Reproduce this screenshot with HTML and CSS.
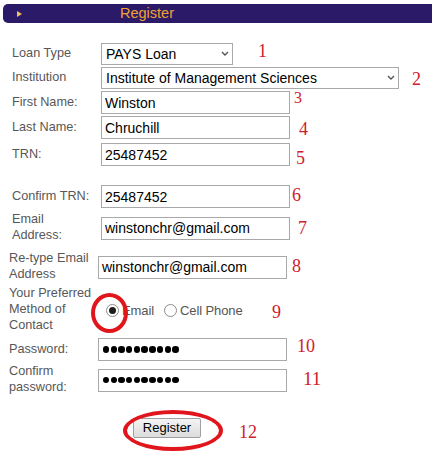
FILE: index.html
```html
<!DOCTYPE html>
<html lang="en">
<head>
<meta charset="utf-8">
<title>Register</title>
<link rel="stylesheet" href="styles.css">
</head>
<body>
<div class="page">
  <div class="titlebar">
    <svg class="tri" width="5" height="6" viewBox="0 0 5 6"><path d="M0 0 L5 3 L0 6 Z" fill="#f2c15e"/></svg>
    <span class="title">Register</span>
  </div>

  <form class="form">
    <div class="group group-a">
      <div class="row row-first">
        <label class="lbl">Loan Type</label>
        <div class="select sel-short"><span>PAYS Loan</span><svg class="chev" width="8" height="5" viewBox="0 0 8 5"><path d="M1 1 L4 4 L7 1" fill="none" stroke="#555" stroke-width="1.4"/></svg></div>
      </div>
      <div class="row">
        <label class="lbl">Institution</label>
        <div class="select sel-long"><span>Institute of Management Sciences</span><svg class="chev" width="8" height="5" viewBox="0 0 8 5"><path d="M1 1 L4 4 L7 1" fill="none" stroke="#555" stroke-width="1.4"/></svg></div>
      </div>
      <div class="row">
        <label class="lbl">First Name:</label>
        <div class="field">Winston</div>
      </div>
      <div class="row">
        <label class="lbl">Last Name:</label>
        <div class="field">Chruchill</div>
      </div>
      <div class="row mt-2">
        <label class="lbl">TRN:</label>
        <div class="field">25487452</div>
      </div>
      <div class="row mt-17">
        <label class="lbl">Confirm TRN:</label>
        <div class="field">25487452</div>
      </div>
      <div class="row row-2l mt-3">
        <label class="lbl">Email Address:</label>
        <div class="field">winstonchr@gmail.com</div>
      </div>
    </div>

    <div class="group group-b">
      <div class="row row-2l mt-7">
        <label class="lbl">Re-type Email Address</label>
        <div class="field">winstonchr@gmail.com</div>
      </div>
      <div class="row row-3l mt-3">
        <label class="lbl">Your Preferred Method of Contact</label>
        <div class="choices">
          <span class="radio on"></span><span class="opt">Email</span>
          <span class="radio gap-radio"></span><span class="opt">Cell Phone</span>
        </div>
      </div>
      <div class="row mt-3">
        <label class="lbl">Password:</label>
        <div class="field pw" aria-label="password"><i></i><i></i><i></i><i></i><i></i><i></i><i></i><i></i><i></i><i></i></div>
      </div>
      <div class="row row-2l mt-2">
        <label class="lbl">Confirm password:</label>
        <div class="field pw" aria-label="confirm password"><i></i><i></i><i></i><i></i><i></i><i></i><i></i><i></i><i></i><i></i></div>
      </div>
      <div class="row mt-19">
        <button type="button" class="btn">Register</button>
      </div>
    </div>
  </form>

  <div class="notes">
    <span class="num n1">1</span>
    <span class="num n2">2</span>
    <span class="num n3">3</span>
    <span class="num n4">4</span>
    <span class="num n5">5</span>
    <span class="num n6">6</span>
    <span class="num n7">7</span>
    <span class="num n8">8</span>
    <span class="num n9">9</span>
    <span class="num n10">10</span>
    <span class="num n11">11</span>
    <span class="num n12">12</span>
    <span class="ring ring-radio"></span>
    <span class="ring ring-btn"></span>
  </div>
</div>
</body>
</html>
```

FILE: styles.css
```css
* { box-sizing: border-box; }
html, body { margin: 0; background: #fff; }
body { font-family: "Liberation Sans", Arial, sans-serif; }

.page { position: relative; width: 432px; height: 475px; overflow: hidden; }

.titlebar {
  margin: 4px 0 0 3px;
  height: 19px;
  background: #2a1a67;
  border-radius: 5px 0 0 5px;
  display: flex;
  align-items: center;
  padding-left: 14px;
}
.tri { display: block; flex: none; }
.title { margin-left: 98px; color: #f2a232; font-size: 14.5px; line-height: 19px; }

.form { display: flex; flex-direction: column; margin-top: 19px; }
.group { display: flex; flex-direction: column; }

.row { display: flex; align-items: center; height: 25px; }
.row-first { height: 23px; }
.row-2l { height: 32px; }
.row-3l { height: 48px; }
.mt-2 { margin-top: 2px; }
.mt-3 { margin-top: 3px; }
.mt-7 { margin-top: 7px; }
.mt-17 { margin-top: 17px; }
.mt-19 { margin-top: 19px; }

.group-a .row { padding-left: 12px; }
.group-a .lbl { width: 89px; padding-right: 9px; }
.group-b .row { padding-left: 9px; }
.group-b .lbl { width: 89px; padding-right: 3px; }

.lbl {
  flex: none;
  font-size: 12.7px;
  line-height: 16px;
  color: #575757;
  padding-bottom: 2px;
}

.field {
  flex: none;
  width: 189px;
  height: 23px;
  border: 1px solid #a9a9a9;
  padding: 0 3px;
  font-size: 14px;
  color: #000;
  display: flex;
  align-items: center;
  background: #fff;
}

.select {
  flex: none;
  height: 22px;
  border: 1px solid #a9a9a9;
  display: flex;
  align-items: center;
  justify-content: space-between;
  padding: 0 3px 0 4px;
  font-size: 14px;
  color: #000;
}
.sel-short { width: 132px; }
.sel-long { width: 298px; }
.chev { display: block; }

.choices { display: flex; align-items: center; margin-left: 8px; }
.radio {
  width: 13px; height: 13px;
  border-radius: 50%;
  border: 1px solid #8c8c8c;
  background: #fff;
  display: grid;
  place-items: center;
}
.radio.on::after {
  content: "";
  width: 7px; height: 7px;
  border-radius: 50%;
  background: #1e1e1e;
}
.gap-radio { margin-left: 10px; }
.opt { font-size: 13px; color: #555; margin-left: 3px; letter-spacing: -0.1px; }
.choices .opt:first-of-type { margin-left: 5px; }

.pw { gap: 1.3px; padding-left: 4px; }
.pw i { width: 6.4px; height: 6.4px; border-radius: 50%; background: #000; flex: none; }

.btn {
  margin-left: 124px;
  width: 68px;
  height: 20px;
  border: 1px solid #a0a0a0;
  border-radius: 2px;
  background: linear-gradient(#f4f4f4, #dcdcdc);
  font: 13px "Liberation Sans", Arial, sans-serif;
  color: #000;
  padding: 0;
}

.notes { position: absolute; inset: 0; pointer-events: none; }
.num {
  position: absolute;
  font: 18px/18px "Liberation Serif", "Times New Roman", serif;
  color: #cf2030;
}
.n1 { left: 258px; top: 42px; }
.n2 { left: 412px; top: 70px; }
.n3 { left: 294px; top: 90px; font-size: 16px; line-height: 16px; }
.n4 { left: 299px; top: 120px; }
.n5 { left: 296px; top: 149px; }
.n6 { left: 292px; top: 186px; }
.n7 { left: 298px; top: 219px; }
.n8 { left: 292px; top: 257px; }
.n9 { left: 272px; top: 303px; }
.n10 { left: 297px; top: 337px; }
.n11 { left: 303px; top: 370px; font-size: 19px; }
.n12 { left: 239px; top: 423px; }

.ring {
  position: absolute;
  border: 4px solid #e1161d;
  border-radius: 50%;
}
.ring-radio { left: 91px; top: 293px; width: 37px; height: 40px; }
.ring-btn { left: 123px; top: 410px; width: 100px; height: 41px; }
```
